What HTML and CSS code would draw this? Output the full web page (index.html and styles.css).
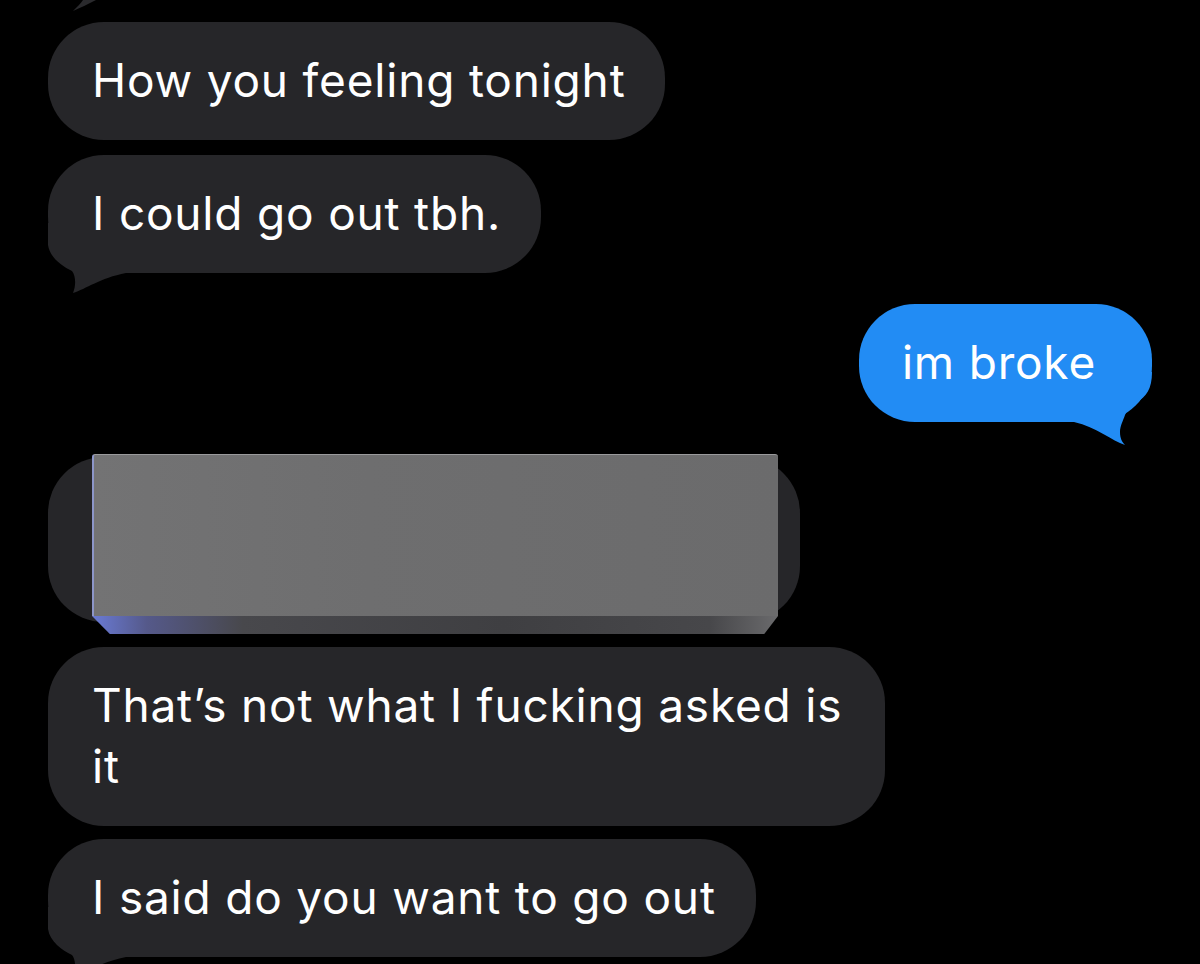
FILE: index.html
```html
<!DOCTYPE html>
<html lang="en">
<head>
  <meta charset="UTF-8">
  <title>Messages</title>
  <link rel="stylesheet" href="styles.css">
</head>
<body>

  <div class="thread">

    <!-- tail of the bubble above, cut off by the screenshot -->
    <svg class="cut-tail" width="50" height="12" viewBox="0 0 50 12">
      <path d="M25 11 C29 7 33 3 35 0 L48 0 C40 4 32 8 25 11 Z" />
    </svg>

    <div class="msg in"><span class="text">How you feeling tonight</span></div>

    <div class="msg in gap-s">
      <span class="text">I could go out tbh.</span>
      <svg class="tail tail-left" width="80" height="76" viewBox="0 0 80 76">
        <path d="M0 3 V25 C2 38 14 46 24 51 C28 56 28 66 25 73 C38 69 52 58 78 53 V3 Z" />
      </svg>
    </div>

    <div class="msg out gap-l">
      <span class="text">im broke</span>
      <svg class="tail tail-right" width="80" height="78" viewBox="0 0 80 78">
        <path d="M0 3 C0 20 6 28 15 33 C21 37 25 41 27 46 C29 52 32 57 32 63 C32 69 30 73 27 76 C40 72 55 58 78 53 V3 Z" />
      </svg>
    </div>

    <!-- blurred out message -->
    <div class="msg in hidden-msg gap-xl">
      <div class="redact"></div>
    </div>

    <div class="msg in gap-m"><span class="text">That’s not what I fucking asked is it</span></div>

    <div class="msg in gap-xs">
      <span class="text">I said do you want to go out</span>
      <svg class="tail tail-left" width="80" height="76" viewBox="0 0 80 76">
        <path d="M0 3 V25 C2 38 14 46 24 51 C28 56 28 66 25 73 C38 69 52 58 78 53 V3 Z" />
      </svg>
    </div>

  </div>

</body>
</html>
```

FILE: styles.css
```css
body {
  margin: 0;
  background-color: #000;
  font-family: Inter, "Liberation Sans", Arial, sans-serif;
  height: 964px;
  overflow: hidden;
}

.thread {
  display: flex;
  flex-direction: column;
  align-items: flex-start;
  padding: 0 48px;
}

.cut-tail {
  display: block;
  fill: #2a2a2d;
  margin-bottom: 10px;
}

.msg {
  position: relative;
  box-sizing: border-box;
  max-width: 837px;
  padding: 28px 40px 29px 44px;
  border-radius: 56px;
  font-size: 46px;
  line-height: 61px;
  letter-spacing: 0.8px;
  color: #fff;
  background-color: #262629;
}

.text {
  position: relative;
  z-index: 1;
}

.out {
  align-self: flex-end;
  background-color: #228cf4;
  padding-left: 43px;
  padding-right: 56px;
}

.gap-xs { margin-top: 13px; }
.gap-s  { margin-top: 15px; }
.gap-m  { margin-top: 25px; }
.gap-l  { margin-top: 31px; }
.gap-xl { margin-top: 35px; }

.tail {
  position: absolute;
  bottom: -23px;
  fill: #262629;
}

.tail-left {
  left: 0;
}

.tail-right {
  right: 0;
  bottom: -25px;
  fill: #228cf4;
  transform: scaleX(-1);
}

.hidden-msg {
  width: 752px;
  height: 165px;
}

.redact {
  position: absolute;
  top: -3px;
  left: 44px;
  width: 686px;
  height: 162px;
  box-sizing: border-box;
  border-top: 1px solid #9a9a9c;
  border-left: 2px solid #8d96c9;
  border-radius: 3px 3px 0 0;
  background: linear-gradient(90deg, #737374 0%, #6e6e6f 40%, #6b6b6c 100%);
}

.redact::after {
  content: "";
  position: absolute;
  left: -2px;
  right: 0;
  top: 161px;
  height: 18px;
  clip-path: polygon(0 0, 100% 0, 98% 100%, 2.6% 100%);
  background: linear-gradient(90deg, #6a7bd6 0%, #55598a 8%, #48484c 22%, #3f3f42 60%, #47474a 90%, #6a6a6c 100%);
}
```
